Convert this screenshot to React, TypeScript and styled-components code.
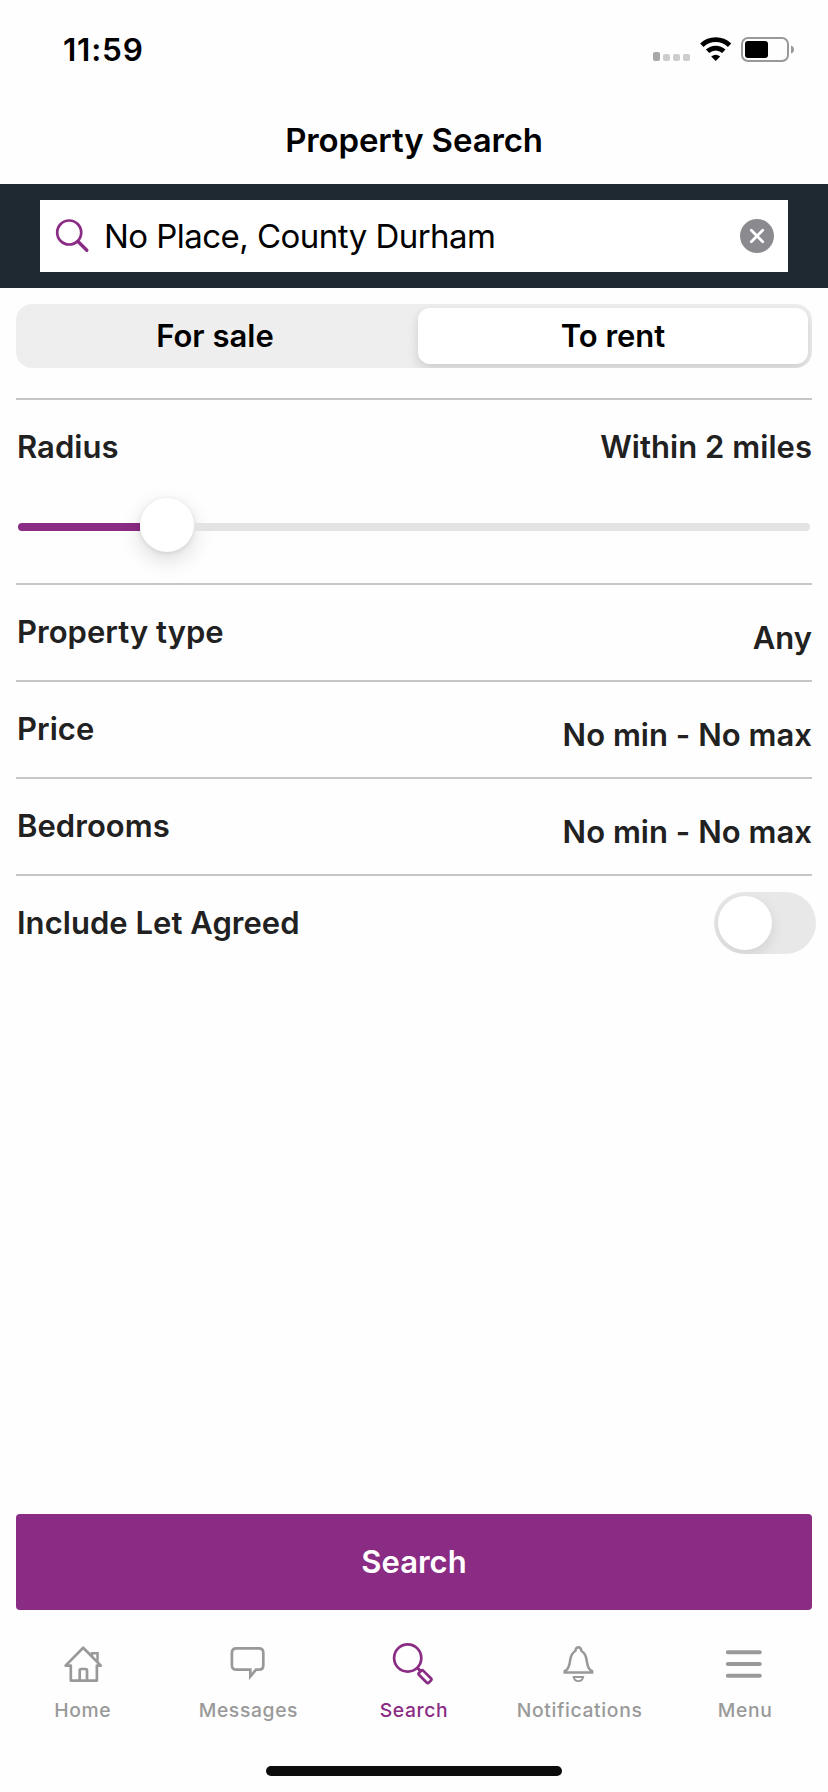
import { ReactNode, useState } from "react";
import styled, { createGlobalStyle } from "styled-components";

const GlobalStyle = createGlobalStyle`
    * {
        box-sizing: border-box;
    }
    body {
        margin: 0;
        background-color: #fefefe;
        font-family: Inter, "Liberation Sans", sans-serif;
        color: #212121;
    }
    button {
        margin: 0;
        padding: 0;
        border: 0;
        background: none;
        font-family: inherit;
        cursor: pointer;
    }
    svg {
        display: block;
    }
`;

const Screen = styled.div`
    display: flex;
    flex-direction: column;
    width: 828px;
    height: 1792px;
    overflow: hidden;
`;

const StatusBar = styled.div`
    display: flex;
    justify-content: space-between;
    height: 98px;
    padding: 30px 33px 0 63px;
`;

const Time = styled.span`
    font-size: 31.5px;
    font-weight: 600;
    line-height: 40px;
    letter-spacing: 0.8px;
    color: #000;
`;

const StatusIcons = styled.div`
    display: flex;
    gap: 9px;
    height: 40px;
    padding-top: 7px;
`;

const Header = styled.h1`
    height: 86px;
    margin: 0;
    font-size: 33px;
    font-weight: 600;
    line-height: 84px;
    letter-spacing: -0.13px;
    text-align: center;
    color: #000;
`;

const SearchBar = styled.div`
    height: 104px;
    padding: 16px 40px;
    background-color: #1f2931;
`;

const SearchField = styled.div`
    display: flex;
    align-items: center;
    height: 72px;
    padding: 0 14px 0 15px;
    background-color: #fff;
`;

const SearchInput = styled.input`
    flex: 1;
    height: 72px;
    margin-left: 13px;
    padding: 0;
    border: 0;
    outline: 0;
    font-family: inherit;
    font-size: 33px;
    letter-spacing: -0.54px;
    color: #000;
    background: transparent;
`;

const Content = styled.main`
    flex: 1;
    padding: 16px 16px 0;
`;

const Segmented = styled.div`
    display: grid;
    grid-template-columns: 1fr 1fr;
    gap: 8px;
    padding: 4px;
    height: 64px;
    margin-bottom: 30px;
    border-radius: 16px;
    background-color: #eee;
    overflow: hidden;
`;

const Segment = styled.button<{ $active: boolean }>`
    border-radius: 12px;
    font-size: 31px;
    font-weight: 600;
    line-height: 56px;
    color: #000;
    background-color: ${(props) => (props.$active ? "#fff" : "transparent")};
    box-shadow: ${(props) =>
        props.$active ? "0 5px 12px rgba(0, 0, 0, 0.14)" : "none"};
`;

const Row = styled.div<{ $height?: number }>`
    display: flex;
    justify-content: space-between;
    height: ${(props) => props.$height ?? 97}px;
    padding-top: 26px;
    border-top: 2px solid #c6c6c6;
`;

const RadiusRow = styled(Row)`
    flex-wrap: wrap;
    align-content: flex-start;
`;

const Label = styled.span`
    padding-left: 1px;
    font-size: 31px;
    font-weight: 560;
    line-height: 41px;
    letter-spacing: 0.04px;
`;

const Value = styled(Label)<{ $low?: boolean }>`
    padding-top: ${(props) => (props.$low ? 6 : 0)}px;
`;

const Slider = styled.div`
    display: flex;
    align-items: center;
    width: 100%;
    height: 54px;
    margin-top: 31px;
    padding: 0 2px;
`;

const Track = styled.div<{ $filled?: boolean }>`
    height: 8px;
    margin-top: 4px;
    flex: ${(props) => (props.$filled ? "0 0 122px" : "1")};
    border-radius: ${(props) => (props.$filled ? "4px 0 0 4px" : "0 4px 4px 0")};
    background-color: ${(props) => (props.$filled ? "#8a2b84" : "#e3e3e3")};
`;

const Thumb = styled.div`
    width: 54px;
    height: 54px;
    border-radius: 50%;
    background-color: #fff;
    box-shadow: 0 8px 22px rgba(0, 0, 0, 0.14), 0 1px 5px rgba(0, 0, 0, 0.1);
`;

const Switch = styled.button`
    width: 102px;
    height: 62px;
    margin: -10px -4px 0 0;
    padding: 4px;
    border-radius: 31px;
    background-color: #e8e8e8;
    overflow: hidden;
`;

const Knob = styled.div<{ $on: boolean }>`
    width: 54px;
    height: 54px;
    margin-left: ${(props) => (props.$on ? 40 : 0)}px;
    border-radius: 50%;
    background-color: #fff;
    box-shadow: 0 5px 14px rgba(0, 0, 0, 0.1);
`;

const SearchButton = styled.button`
    height: 96px;
    margin: 0 16px;
    border-radius: 4px;
    font-size: 31px;
    font-weight: 600;
    line-height: 96px;
    color: #fff;
    background-color: #8a2b84;
`;

const TabBar = styled.nav`
    display: grid;
    grid-template-columns: repeat(5, 1fr);
    height: 156px;
    padding-top: 30px;
`;

const Tab = styled.button<{ $active: boolean }>`
    display: flex;
    flex-direction: column;
    align-items: center;
    gap: 9px;
    height: 90px;
    font-size: 19.3px;
    font-weight: ${(props) => (props.$active ? 500 : 460)};
    line-height: 26px;
    letter-spacing: 0.65px;
    color: ${(props) => (props.$active ? "#8a2b84" : "#999")};
`;

const HomeIndicator = styled.div`
    width: 296px;
    height: 10px;
    margin: 0 auto 16px;
    border-radius: 5px;
    background-color: #0c0c0c;
`;

const TabIcon = ({ children }: { children: ReactNode }) => (
    <svg
        width="48"
        height="48"
        viewBox="0 0 48 48"
        fill="none"
        stroke="currentColor"
        strokeWidth="2.7"
    >
        {children}
    </svg>
);

const tabs = [
    {
        name: "Home",
        icon: (
            <TabIcon>
                <path
                    d="M11.8 40.6V25.6H6.6L24.2 7.7L41.8 25.6H37.9V40.6Z"
                    strokeLinejoin="round"
                />
                <path d="M20.7 40V30.5Q20.7 29 22.2 29H26.5Q28 29 28 30.5V40" />
                <path d="M33 16.5V13.2H38.5V22" strokeWidth="2.5" />
            </TabIcon>
        ),
    },
    {
        name: "Messages",
        icon: (
            <TabIcon>
                <path d="M12.4 8.3H34.8Q39.3 8.3 39.3 12.8V25.2Q39.3 29.7 34.8 29.7H32L26.3 36.5V29.7H12.4Q7.9 29.7 7.9 25.2V12.8Q7.9 8.3 12.4 8.3Z" />
            </TabIcon>
        ),
    },
    {
        name: "Search",
        icon: (
            <TabIcon>
                <circle cx="17.7" cy="18" r="13.6" />
                <path d="M27.2 27.6L30.5 31" strokeWidth="3" />
                <rect
                    x="28.1"
                    y="33.7"
                    width="13.8"
                    height="6"
                    rx="1.6"
                    transform="rotate(45 35 36.7)"
                />
            </TabIcon>
        ),
    },
    {
        name: "Notifications",
        icon: (
            <TabIcon>
                <path
                    d="M22.4 7.3C20.3 7.3 19.6 8.7 19.3 11C16.2 12.9 14.7 16.2 14.2 20C13.6 24.5 12.9 28 10.5 30L8.7 31V32.4H36.1V31L34.3 30C31.9 28 31.2 24.5 30.6 20C30.1 16.2 28.6 12.9 25.5 11C25.2 8.7 24.5 7.3 22.4 7.3Z"
                    strokeWidth="2.5"
                />
                <path
                    d="M17.6 37H27.2C26.6 39.8 24.7 41.2 22.4 41.2C20.1 41.2 18.2 39.8 17.6 37Z"
                    strokeWidth="1.8"
                />
            </TabIcon>
        ),
    },
    {
        name: "Menu",
        icon: (
            <TabIcon>
                <path
                    d="M6.8 12.3H38.8M6.8 24H38.8M6.8 35.7H38.8"
                    strokeWidth="4"
                    strokeLinecap="round"
                />
            </TabIcon>
        ),
    },
];

const filters = [
    { label: "Property type", value: "Any" },
    { label: "Price", value: "No min - No max" },
    { label: "Bedrooms", value: "No min - No max" },
];

const App = () => {
    const [channel, setChannel] = useState("To rent");
    const [place, setPlace] = useState("No Place, County Durham");
    const [letAgreed, setLetAgreed] = useState(false);
    const [tab, setTab] = useState("Search");

    return (
        <Screen>
            <GlobalStyle />
            <StatusBar>
                <Time>11:59</Time>
                <StatusIcons>
                    <svg width="38" height="25" viewBox="0 0 38 25">
                        <rect y="15" width="7" height="9" rx="2" fill="#a8a8a8" />
                        <rect x="10" y="17" width="7" height="7" rx="2" fill="#cdcdcd" />
                        <rect x="20" y="17" width="7" height="7" rx="2" fill="#cdcdcd" />
                        <rect x="30" y="17" width="7" height="7" rx="2" fill="#cdcdcd" />
                    </svg>
                    <svg width="32" height="25" viewBox="0 0 32 25" fill="none">
                        <path
                            d="M1.8 8.2A20 20 0 0 1 29.6 8.2M7.6 14.3A11.8 11.8 0 0 1 23.8 14.3"
                            stroke="#000"
                            strokeWidth="4.9"
                        />
                        <path
                            d="M11.2 19.5Q15.7 15.8 20.2 19.5L15.7 24Z"
                            fill="#000"
                        />
                    </svg>
                    <svg width="54" height="25" viewBox="0 0 54 25" fill="none">
                        <rect
                            x="1"
                            y="1"
                            width="46"
                            height="23"
                            rx="6"
                            stroke="#999"
                            strokeWidth="2"
                        />
                        <rect x="4" y="4" width="23" height="17" rx="3" fill="#000" />
                        <path d="M50 8.5Q53 9.5 53 12.5Q53 15.5 50 16.5Z" fill="#999" />
                    </svg>
                </StatusIcons>
            </StatusBar>
            <Header>Property Search</Header>
            <SearchBar>
                <SearchField>
                    <svg width="36" height="36" viewBox="0 0 36 36" fill="none">
                        <circle
                            cx="14.2"
                            cy="14.5"
                            r="12"
                            stroke="#8a2b84"
                            strokeWidth="2.7"
                        />
                        <path
                            d="M23 23.5L31.8 32.3"
                            stroke="#8a2b84"
                            strokeWidth="3.4"
                            strokeLinecap="round"
                        />
                    </svg>
                    <SearchInput
                        value={place}
                        onChange={(e) => setPlace(e.target.value)}
                    />
                    <button type="button" onClick={() => setPlace("")}>
                        <svg width="34" height="34" viewBox="0 0 34 34" fill="none">
                            <circle cx="17" cy="17" r="17" fill="#8b8b8f" />
                            <path
                                d="M11.3 11.3L22.7 22.7M22.7 11.3L11.3 22.7"
                                stroke="#fff"
                                strokeWidth="2.8"
                                strokeLinecap="round"
                            />
                        </svg>
                    </button>
                </SearchField>
            </SearchBar>
            <Content>
                <Segmented>
                    {["For sale", "To rent"].map((name) => (
                        <Segment
                            key={name}
                            type="button"
                            $active={channel === name}
                            onClick={() => setChannel(name)}
                        >
                            {name}
                        </Segment>
                    ))}
                </Segmented>
                <RadiusRow $height={185}>
                    <Label>Radius</Label>
                    <Value>Within 2 miles</Value>
                    <Slider>
                        <Track $filled />
                        <Thumb />
                        <Track />
                    </Slider>
                </RadiusRow>
                {filters.map((filter) => (
                    <Row key={filter.label}>
                        <Label>{filter.label}</Label>
                        <Value $low>{filter.value}</Value>
                    </Row>
                ))}
                <Row>
                    <Label>Include Let Agreed</Label>
                    <Switch type="button" onClick={() => setLetAgreed(!letAgreed)}>
                        <Knob $on={letAgreed} />
                    </Switch>
                </Row>
            </Content>
            <SearchButton type="button">Search</SearchButton>
            <TabBar>
                {tabs.map(({ name, icon }) => (
                    <Tab
                        key={name}
                        type="button"
                        $active={tab === name}
                        onClick={() => setTab(name)}
                    >
                        {icon}
                        {name}
                    </Tab>
                ))}
            </TabBar>
            <HomeIndicator />
        </Screen>
    );
};

export default App;
